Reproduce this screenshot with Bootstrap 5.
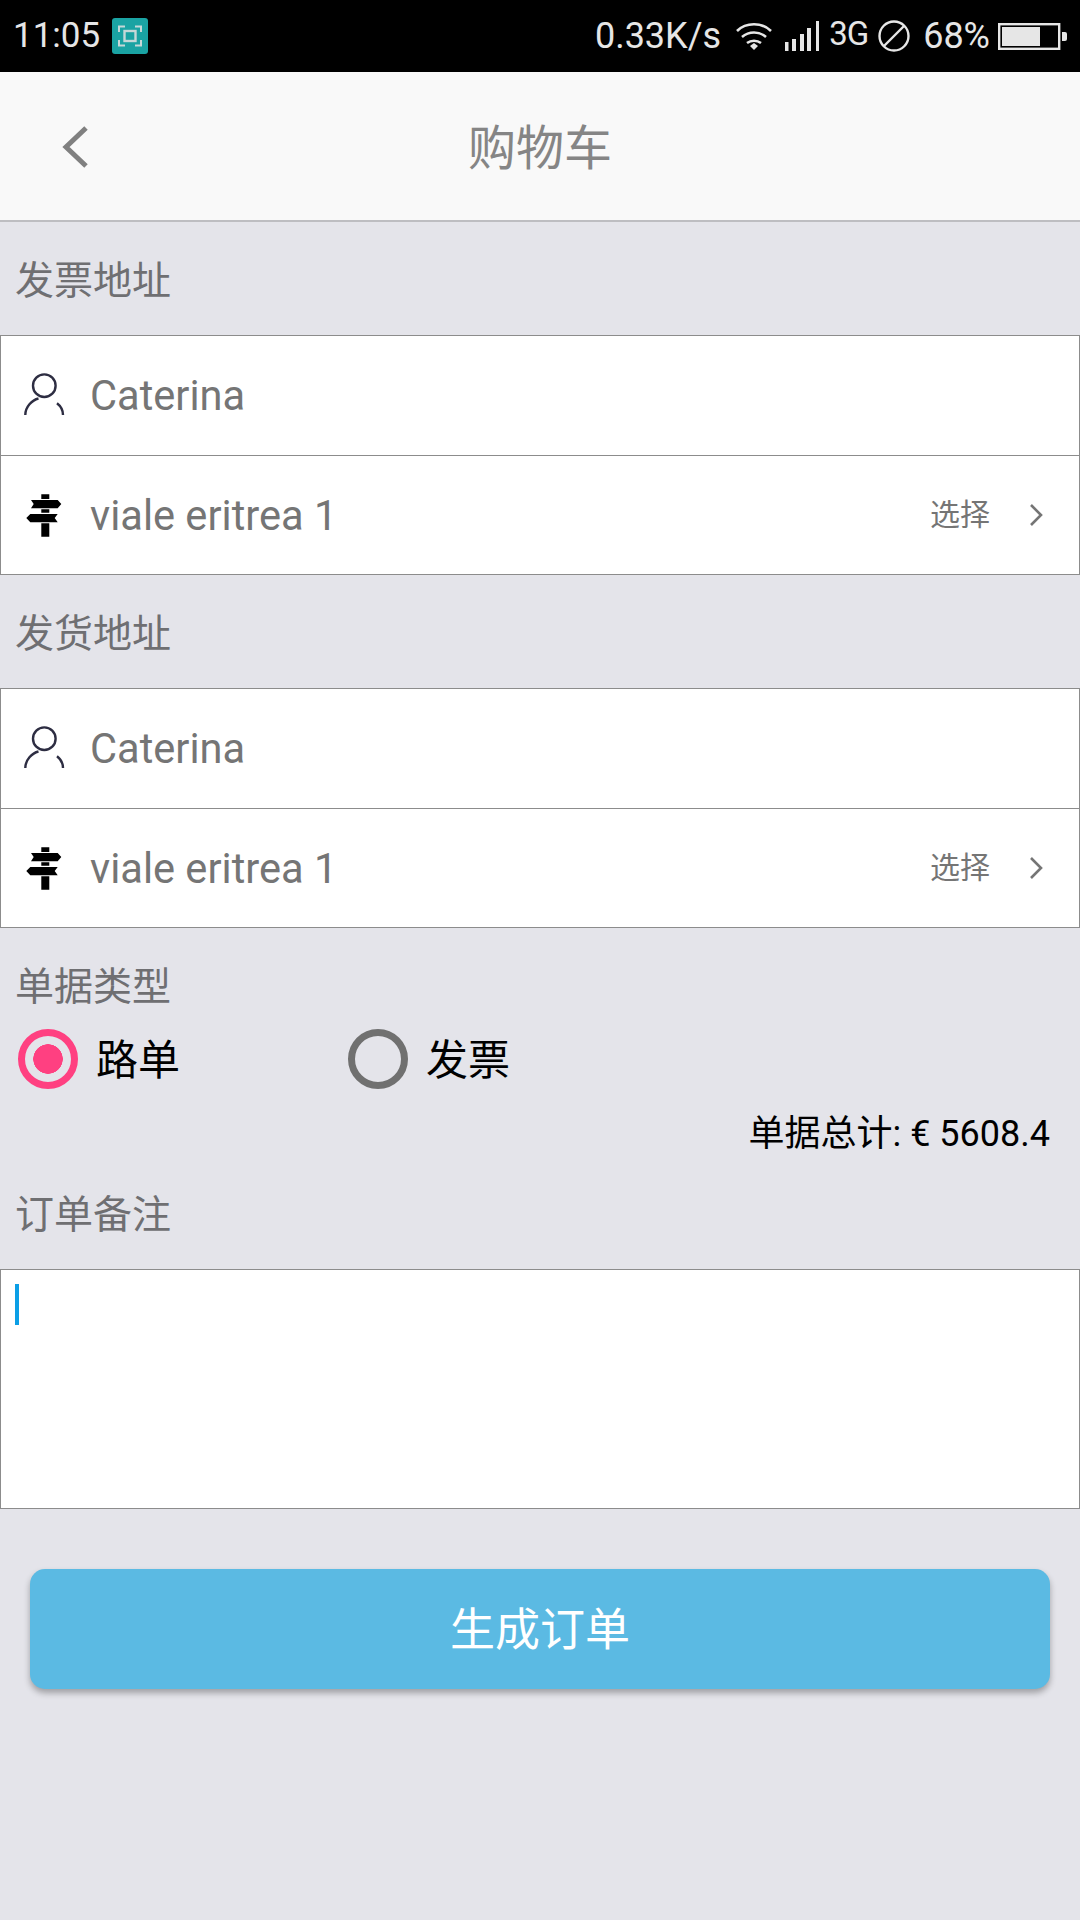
<!DOCTYPE html>
<html lang="zh">
<head>
    <meta charset="UTF-8">
    <meta name="viewport" content="width=device-width, initial-scale=1.0">
    <title>购物车</title>
    <link href="https://cdn.jsdelivr.net/npm/bootstrap@5.3.0/dist/css/bootstrap.min.css" rel="stylesheet">
    <style>
        body {
            background-color: #e4e4ea;
            font-family: Roboto, "Noto Sans CJK SC", sans-serif;
            width: 1080px;
            height: 1920px;
        }
        .status-bar {
            height: 72px;
            background: #000;
            color: #e6e6e6;
            font-size: 36px;
            padding: 0 13px 0 13px;
        }
        .clock { font-size: 35px; }
        .shot-badge {
            width: 36px;
            height: 36px;
            margin-left: 12px;
            margin-top: -1px;
        }
        .speed { margin-right: 15px; }
        .signal-icon { margin-left: 13px; }
        .net-3g { font-size: 33px; margin: -4px 10px 0 10px; letter-spacing: -1px; }
        .pct { margin: 0 8px 0 13px; }
        .top-bar {
            height: 150px;
            background: #f9f9f9;
            border-bottom: 2px solid #bdbdc1;
            padding: 0;
        }
        .back-btn { margin-left: 61px; margin-top: 2px; }
        .page-title {
            font-size: 48px;
            color: #858585;
            line-height: 1;
            margin-top: 5px;
        }
        .sec-label {
            font-size: 39px;
            line-height: 56px;
            color: #6f6f72;
            padding: 31px 15px 26px;
            height: 113px;
        }
        .sec-label.tight { padding-bottom: 0; height: 85px; }
        .addr-group { border-radius: 0; }
        .addr-group .list-group-item {
            height: 119.5px;
            border-color: #8c8c8c;
            border-width: 1.5px;
            padding: 0 36px 0 22px;
            font-size: 41.6px;
            color: #757575;
        }
        .addr-group .list-group-item:first-child { height: 120.5px; }
        .addr-group .list-group-item + .list-group-item { border-top-width: 0; }
        .addr-icon { width: 44px; flex: none; margin-right: 23px; }
        .addr-text { margin-top: 2px; }
        .pick-text { font-size: 30px; margin-right: 39px; }
        .radio-row { height: 92px; padding-left: 18px; }
        .radio-row .form-check-input {
            appearance: none;
            width: 60px;
            height: 60px;
            margin: 0;
            float: none;
            border: 7px solid #707070;
            background: transparent none;
        }
        .radio-row .form-check-input:checked {
            border-color: #ff4081;
            background: radial-gradient(circle, #ff4081 0 14.5px, transparent 15px);
        }
        .radio-item { width: 330px; gap: 18px; }
        .radio-item label { font-size: 42px; color: #000; line-height: 1; margin-top: 3px; }
        .total-row {
            height: 51px;
            font-size: 36px;
            color: #000;
            padding: 7px 30px 0 0;
        }
        .note-box {
            height: 240px;
            background: #fff;
            border: 1.5px solid #8c8c8c;
            padding: 14px 14px;
        }
        .caret-bar { width: 4px; height: 41px; background: #0b9fe6; }
        .submit-wrap { padding: 60px 30px 0; }
        .submit-btn {
            height: 120px;
            padding-top: 10px;
            background: #5bbae3;
            border: 0;
            border-radius: 15px;
            color: #fff;
            font-size: 45px;
            box-shadow: 0 4px 6px rgba(0, 0, 0, .3);
        }
    </style>
</head>
<body>
    <div class="status-bar d-flex align-items-center">
        <span class="clock">11:05</span>
        <svg class="shot-badge" viewBox="0 0 36 36">
            <rect width="36" height="36" rx="3" fill="#1aa3a3"/>
            <path d="M7 14V8.500h6M23 8.500h6V14M7 22v5.500h6M23 27.500h6V22" fill="none" stroke="#c5d8d8" stroke-width="2"/>
            <rect x="12.500" y="13" width="11" height="10" fill="none" stroke="#c5d8d8" stroke-width="2.400"/>
        </svg>
        <span class="ms-auto speed">0.33K/s</span>
        <svg width="36" height="28" viewBox="0 0 36 28">
            <path d="M1 9C10 0 26 0 35 9M6 15C13 9 23 9 30 15M11 21C15 18 21 18 25 21" fill="none" stroke="#e6e6e6" stroke-width="2.600"/>
            <path d="M14 24l4-3 4 3-4 4z" fill="#e6e6e6"/>
        </svg>
        <svg class="signal-icon" width="34" height="30" viewBox="0 0 34 30">
            <path d="M0 21h3.500v9H0zM7 18h4v12H7zM15 13h4v17h-4zM22 7h4v23h-4zM31 0h3v30h-3z" fill="#e6e6e6"/>
        </svg>
        <span class="net-3g">3G</span>
        <svg width="32" height="32" viewBox="0 0 32 32">
            <circle cx="16" cy="16" r="14.500" fill="none" stroke="#e6e6e6" stroke-width="2.400"/>
            <path d="M6 26L26 6" stroke="#e6e6e6" stroke-width="2.400"/>
        </svg>
        <span class="pct">68%</span>
        <svg width="69" height="27" viewBox="0 0 69 27">
            <rect x="1.200" y="1.200" width="60" height="24.600" fill="none" stroke="#e6e6e6" stroke-width="2.400"/>
            <rect x="4" y="4" width="38" height="19" fill="#e6e6e6"/>
            <path d="M64 9h3a2 2 0 0 1 2 2v5a2 2 0 0 1-2 2h-3z" fill="#e6e6e6"/>
        </svg>
    </div>

    <nav class="navbar top-bar position-relative">
        <svg class="back-btn" width="28" height="44" viewBox="0 0 28 44">
            <path d="M25 3L5 22l20 19" fill="none" stroke="#808080" stroke-width="5"/>
        </svg>
        <span class="page-title position-absolute start-50 translate-middle-x">购物车</span>
    </nav>

    <div class="sec-label">发票地址</div>
    <div class="list-group addr-group">
        <div class="list-group-item d-flex align-items-center">
            <svg class="addr-icon" width="44" height="46" viewBox="0 0 44 46">
                <circle cx="21.300" cy="13.700" r="11.300" fill="none" stroke="#2d2d42" stroke-width="2.400"/>
                <path d="M2.300 43C2.300 35 9 28 15.500 26.500M34 31.300C37.500 34 40 38 40 43" fill="none" stroke="#2d2d42" stroke-width="2.400"/>
            </svg>
            <span class="addr-text">Caterina</span>
        </div>
        <div class="list-group-item d-flex align-items-center">
            <svg class="addr-icon" width="44" height="44" viewBox="0 0 44 44">
                <path d="M18.300 1.300h8V6h-8zM8 7h26.700l3.600 4-3.600 4.300H8l2.700-4.300zM18.300 16.300h8v3.400h-8zM7.300 21h27.400l-3 4 3 4.300H7.300l-4-4.300zM18.300 30.300h8v13.400h-8z" fill="#000"/>
            </svg>
            <span class="addr-text">viale eritrea 1</span>
            <span class="pick-text ms-auto">选择</span>
            <svg width="14" height="24" viewBox="0 0 14 24">
                <path d="M2 2l10 10L2 22" fill="none" stroke="#757575" stroke-width="2.600"/>
            </svg>
        </div>
    </div>

    <div class="sec-label">发货地址</div>
    <div class="list-group addr-group">
        <div class="list-group-item d-flex align-items-center">
            <svg class="addr-icon" width="44" height="46" viewBox="0 0 44 46">
                <circle cx="21.300" cy="13.700" r="11.300" fill="none" stroke="#2d2d42" stroke-width="2.400"/>
                <path d="M2.300 43C2.300 35 9 28 15.500 26.500M34 31.300C37.500 34 40 38 40 43" fill="none" stroke="#2d2d42" stroke-width="2.400"/>
            </svg>
            <span class="addr-text">Caterina</span>
        </div>
        <div class="list-group-item d-flex align-items-center">
            <svg class="addr-icon" width="44" height="44" viewBox="0 0 44 44">
                <path d="M18.300 1.300h8V6h-8zM8 7h26.700l3.600 4-3.600 4.300H8l2.700-4.300zM18.300 16.300h8v3.400h-8zM7.300 21h27.400l-3 4 3 4.300H7.300l-4-4.300zM18.300 30.300h8v13.400h-8z" fill="#000"/>
            </svg>
            <span class="addr-text">viale eritrea 1</span>
            <span class="pick-text ms-auto">选择</span>
            <svg width="14" height="24" viewBox="0 0 14 24">
                <path d="M2 2l10 10L2 22" fill="none" stroke="#757575" stroke-width="2.600"/>
            </svg>
        </div>
    </div>

    <div class="sec-label tight">单据类型</div>
    <div class="radio-row d-flex align-items-center">
        <div class="radio-item d-flex align-items-center">
            <input class="form-check-input" type="radio" name="docType" id="docWaybill" checked>
            <label for="docWaybill">路单</label>
        </div>
        <div class="radio-item d-flex align-items-center">
            <input class="form-check-input" type="radio" name="docType" id="docInvoice">
            <label for="docInvoice">发票</label>
        </div>
    </div>
    <div class="total-row d-flex justify-content-end align-items-center">单据总计: € 5608.4</div>

    <div class="sec-label">订单备注</div>
    <div class="note-box"><div class="caret-bar"></div></div>

    <div class="submit-wrap">
        <button type="button" class="btn submit-btn w-100">生成订单</button>
    </div>

    <script src="https://cdn.jsdelivr.net/npm/bootstrap@5.3.0/dist/js/bootstrap.bundle.min.js"></script>
</body>
</html>
